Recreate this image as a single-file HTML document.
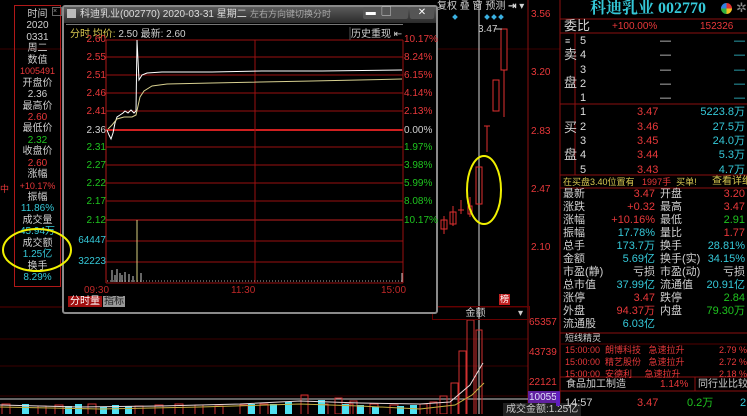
<!DOCTYPE html>
<html><head><meta charset="utf-8"><style>
body{margin:0;width:747px;height:414px;background:#000;overflow:hidden;position:relative;font-family:"Liberation Sans","Noto Sans CJK SC",sans-serif;font-size:11px}
.a{position:absolute;white-space:nowrap;line-height:13px}
.r{color:#e8383a}.g{color:#1fc41f}.c{color:#35c8d8}.w{color:#d0d0d0}.y{color:#d8c850}.dr{color:#c02828}
.lp div{text-align:center;line-height:11.45px;height:11.45px;font-size:10px}
</style></head><body>
<svg class="a" style="left:0;top:0" width="747" height="414">
<line x1="0" y1="49" x2="560" y2="49" stroke="#3a0000"/>
<line x1="0" y1="366" x2="528" y2="366" stroke="#3a0000"/>
<line x1="0" y1="396" x2="528" y2="396" stroke="#3a0000"/>
<line x1="0" y1="339" x2="528" y2="339" stroke="#3a0000"/>
<line x1="0" y1="307" x2="528" y2="307" stroke="#5a0000"/>
<line x1="528" y1="0" x2="528" y2="414" stroke="#8a1010"/>
<line x1="479" y1="0" x2="479" y2="414" stroke="#d8d8d8"/>
<line x1="0" y1="399" x2="528" y2="399" stroke="#c8c8c8"/>
<line x1="560" y1="0" x2="560" y2="414" stroke="#8a1010"/>
<g stroke="#e03030" fill="none">
<line x1="444" y1="216" x2="444" y2="234"/><rect x="441" y="220" width="6" height="9"/>
<line x1="453" y1="206" x2="453" y2="226"/><rect x="450" y="212" width="6" height="12"/>
<line x1="461" y1="200" x2="461" y2="214"/><line x1="458" y1="210" x2="464" y2="210"/>
<line x1="470" y1="197" x2="470" y2="217"/><rect x="468" y="206" width="4" height="8"/>
<rect x="476" y="167" width="6" height="37"/>
<line x1="487" y1="126" x2="487" y2="152"/><line x1="484" y1="126" x2="490" y2="126"/>
<rect x="493" y="80" width="6" height="31"/>
<line x1="504" y1="29" x2="504" y2="117"/><rect x="501" y="29" width="6" height="41" fill="#000"/>
</g>
<text x="478" y="32" fill="#ccc" font-size="10" font-family="Liberation Sans">3.47</text>
<line x1="495" y1="29" x2="502" y2="29" stroke="#ccc"/>
<g fill="#3ab0e0"><rect x="453" y="15" width="4" height="4" transform="rotate(45 455 17)"/><rect x="485" y="15" width="4" height="4" transform="rotate(45 487 17)"/><rect x="492" y="15" width="4" height="4" transform="rotate(45 494 17)"/><rect x="499" y="15" width="4" height="4" transform="rotate(45 501 17)"/></g>
<g stroke="#d03030" fill="none">
<rect x="2" y="404" width="8" height="12"/><rect x="38" y="406" width="8" height="10"/><rect x="55" y="405" width="8" height="10"/><rect x="88" y="404" width="8" height="12"/>
<rect x="135" y="406" width="8" height="10"/><rect x="155" y="405" width="8" height="10"/><rect x="175" y="404" width="8" height="12"/><rect x="195" y="405" width="8" height="10"/><rect x="215" y="406" width="8" height="10"/><rect x="240" y="405" width="8" height="10"/><rect x="260" y="404" width="8" height="12"/>
<rect x="320" y="404" width="8" height="12"/><rect x="345" y="404" width="8" height="12"/><rect x="370" y="404" width="8" height="12"/>
<rect x="301" y="395" width="7" height="20"/><rect x="335" y="398" width="7" height="16"/><rect x="350" y="401" width="7" height="14"/>
<rect x="390" y="405" width="8" height="10"/><rect x="420" y="404" width="7" height="12"/><rect x="430" y="402" width="7" height="14"/>
<rect x="451" y="383" width="7" height="34"/><rect x="440" y="396" width="7" height="18"/>
<rect x="459" y="351" width="7" height="64"/><rect x="467" y="320" width="7" height="95"/><rect x="476" y="330" width="6" height="85"/>
</g>
<g fill="#50e0f0">
<rect x="22" y="404" width="7" height="12"/><rect x="65" y="406" width="7" height="10"/><rect x="75" y="404" width="7" height="12"/><rect x="100" y="407" width="7" height="8"/><rect x="112" y="405" width="7" height="10"/><rect x="125" y="406" width="7" height="10"/><rect x="248" y="404" width="7" height="12"/><rect x="270" y="404" width="7" height="12"/><rect x="285" y="402" width="7" height="14"/><rect x="318" y="400" width="7" height="16"/><rect x="342" y="404" width="7" height="12"/><rect x="357" y="405" width="7" height="10"/><rect x="372" y="407" width="7" height="8"/><rect x="397" y="406" width="7" height="10"/><rect x="410" y="405" width="7" height="10"/>
</g>
<polyline points="0,405 80,407 160,406 240,404 300,401 360,403 420,404 450,402 470,385 483,363" fill="none" stroke="#e8d8d8"/>
<polyline points="0,407 100,409 200,407 300,404 360,406 420,409 455,405 472,395 484,383" fill="none" stroke="#c8b040"/>
<rect x="528" y="391" width="32" height="12" fill="#6020a0"/>
<ellipse cx="484" cy="190" rx="17" ry="34" fill="none" stroke="#f0f000" stroke-width="2"/>
</svg>

<div class="a r" style="left:531px;top:8px;font-size:10px">3.56</div>
<div class="a r" style="left:531px;top:66px;font-size:10px">3.20</div>
<div class="a r" style="left:531px;top:125px;font-size:10px">2.83</div>
<div class="a r" style="left:531px;top:183px;font-size:10px">2.47</div>
<div class="a r" style="left:531px;top:241px;font-size:10px">2.10</div>
<div class="a r" style="left:529px;top:316px;font-size:10px">65357</div>
<div class="a r" style="left:529px;top:346px;font-size:10px">43739</div>
<div class="a r" style="left:529px;top:376px;font-size:10px">22121</div>
<div class="a" style="left:529px;top:391px;font-size:10px;color:#e0e0ff">10055</div>
<div class="a" style="left:503px;top:403px;font-size:10px;color:#ccc;background:#202020;padding:0 3px">成交金额:1.25亿</div>
<div class="a w" style="left:437px;top:0;font-size:10px">复权 叠 窗 预测 <b>⇥</b> ▾</div>
<div class="a" style="left:432px;top:306px;width:96px;height:12px;border:1px solid #600;color:#ccc;font-size:10px;text-align:center">金额 <span style="float:right;margin-right:6px">▾</span></div>
<div class="a" style="left:499px;top:294px;width:11px;height:11px;background:#c02020;color:#fff;font-size:9px;line-height:11px;text-align:center">榜</div>

<div class="a" style="left:14px;top:5px;width:45px;height:280px;border:1px solid #b01818"></div>
<div class="a" style="left:52px;top:7px;width:8px;height:7px;border:1px solid #666;font-size:7px;line-height:7px;color:#999">×</div>
<div class="a lp" style="left:15px;top:9px;width:45px">
<div class="w">时间</div><div class="w">2020</div><div class="w">0331</div><div class="w">周二</div><div class="w">数值</div><div class="r" style="font-size:9px">1005491</div><div class="w">开盘价</div><div class="w">2.36</div><div class="w">最高价</div><div class="r">2.60</div><div class="w">最低价</div><div class="g">2.32</div><div class="w">收盘价</div><div class="r">2.60</div><div class="w">涨幅</div><div class="r" style="font-size:9px">+10.17%</div><div class="w">振幅</div><div class="c">11.86%</div><div class="w">成交量</div><div class="c">45.94万</div><div class="w">成交额</div><div class="c">1.25亿</div><div class="w">换手</div><div class="c">8.29%</div>
</div>
<div class="a r" style="left:0;top:183px;font-size:9px">中</div>

<div class="a" style="left:62px;top:5px;width:372px;height:305px;border:2px solid #8a8a8a;border-radius:3px;background:#000"></div>
<div class="a" style="left:64px;top:7px;width:372px;height:16px;background:linear-gradient(#5a5a5a,#2a2a2a)"></div>
<div class="a" style="left:67px;top:9px;width:9px;height:9px;background:#bbb"></div>
<div class="a" style="left:80px;top:8px;color:#ddd;font-size:10px">科迪乳业(002770) 2020-03-31 星期二</div>
<div class="a" style="left:250px;top:8px;color:#aaa;font-size:9px">左右方向键切换分时</div>
<div class="a" style="left:363px;top:7px;width:45px;height:12px;background:#555;border-radius:2px;color:#fff;font-size:10px;line-height:12px">&nbsp;▬&nbsp;&nbsp;▢</div>
<div class="a" style="left:410px;top:7px;width:24px;height:12px;background:#555;border-radius:2px;color:#fff;font-size:10px;line-height:12px;text-align:center">✕</div>
<div class="a" style="left:66px;top:24px;width:337px;height:1px;background:#777"></div>

<svg class="a" style="left:62px;top:5px" width="374" height="308">
<g stroke="#9a1010">
<line x1="44" y1="35" x2="341" y2="35"/><line x1="44" y1="52" x2="341" y2="52"/><line x1="44" y1="70" x2="341" y2="70"/><line x1="44" y1="88" x2="341" y2="88"/><line x1="44" y1="106" x2="341" y2="106"/><line x1="44" y1="125" x2="341" y2="125" stroke="#d02020" stroke-width="2"/><line x1="44" y1="142" x2="341" y2="142"/><line x1="44" y1="160" x2="341" y2="160"/><line x1="44" y1="178" x2="341" y2="178"/><line x1="44" y1="196" x2="341" y2="196"/><line x1="44" y1="215" x2="341" y2="215" stroke="#c02020"/><line x1="44" y1="236" x2="341" y2="236"/><line x1="44" y1="257" x2="341" y2="257"/>
<line x1="44" y1="35" x2="44" y2="278" stroke="#b01818"/><line x1="341" y1="35" x2="341" y2="278"/><line x1="44" y1="278" x2="341" y2="278"/><line x1="193" y1="35" x2="193" y2="278"/>
</g>
<line x1="288" y1="22" x2="288" y2="35" stroke="#555"/>
<polyline points="45,125 47,130 49,134 51,128 53,118 55,112 58,110 61,108 63,106 66,108 69,105 72,108 74,106 75,35 77,75 80,70 85,68 100,67 150,67 200,66 260,66 340,65" fill="none" stroke="#ffffff"/>
<polyline points="46,124 50,120 55,114 62,112 70,112 74,110 78,92 82,86 90,81 105,79 150,78 250,76 340,74" fill="none" stroke="#d8d090"/>
<g stroke="#ccc"><line x1="75" y1="215" x2="75" y2="277" stroke="#d8d080"/><line x1="50" y1="265" x2="50" y2="277"/><line x1="53" y1="270" x2="53" y2="277"/><line x1="55" y1="264" x2="55" y2="277"/><line x1="58" y1="268" x2="58" y2="277"/><line x1="60" y1="270" x2="60" y2="277"/><line x1="63" y1="267" x2="63" y2="277"/><line x1="67" y1="269" x2="67" y2="277"/><line x1="71" y1="271" x2="71" y2="277"/><line x1="79" y1="268" x2="79" y2="277"/><line x1="340" y1="268" x2="340" y2="277"/></g>
<line x1="45" y1="276" x2="340" y2="276" stroke="#aaa" stroke-dasharray="1 2"/>
</svg>
<div class="a" style="left:70px;top:28px;font-size:10px" ><span class="y">分时 均价:</span> <span class="w">2.50 最新: 2.60</span></div>
<div class="a w" style="left:351px;top:28px;font-size:10px">历史重现 ⇤</div>
<div class="a" style="left:78px;top:34px;width:28px;text-align:right;font-size:10px;line-height:11px">
<div class="r" style="height:18px">2.60</div><div class="r" style="height:18px">2.55</div><div class="r" style="height:18px">2.51</div><div class="r" style="height:18px">2.46</div><div class="r" style="height:19px">2.41</div><div class="w" style="height:17px">2.36</div><div class="g" style="height:18px">2.31</div><div class="g" style="height:18px">2.27</div><div class="g" style="height:18px">2.22</div><div class="g" style="height:19px">2.17</div><div class="g" style="height:20px">2.12</div><div class="c" style="height:21px">64447</div><div class="c">32223</div>
</div>
<div class="a" style="left:404px;top:34px;font-size:10px;line-height:11px">
<div class="r" style="height:18px">10.17%</div><div class="r" style="height:18px">8.24%</div><div class="r" style="height:18px">6.15%</div><div class="r" style="height:18px">4.14%</div><div class="r" style="height:19px">2.13%</div><div class="w" style="height:17px">0.00%</div><div class="g" style="height:18px">1.97%</div><div class="g" style="height:18px">3.98%</div><div class="g" style="height:18px">5.99%</div><div class="g" style="height:19px">8.08%</div><div class="g">10.17%</div>
</div>
<div class="a dr" style="left:84px;top:284px;font-size:10px">09:30</div>
<div class="a dr" style="left:231px;top:284px;font-size:10px">11:30</div>
<div class="a dr" style="left:381px;top:284px;font-size:10px">15:00</div>
<div class="a" style="left:68px;top:296px;width:34px;height:11px;background:#a01010;color:#fff;font-size:10px;line-height:11px;text-align:center">分时量</div>
<div class="a" style="left:103px;top:296px;width:22px;height:11px;background:#999;color:#222;font-size:10px;line-height:11px;text-align:center">指标</div>

<svg class="a" style="left:0;top:225px" width="80" height="60"><ellipse cx="37" cy="25" rx="34" ry="21" fill="none" stroke="#f0f000" stroke-width="2"/></svg>

<div class="a" style="left:590px;top:0;font-size:16px;line-height:18px;font-weight:bold;color:#35c8d8;font-family:'Liberation Serif','Noto Serif CJK SC',serif">科迪乳业 002770</div>
<div class="a" style="left:721px;top:3px;width:11px;height:11px;border-radius:50%;background:conic-gradient(#e03030 0 25%,#f0c020 0 50%,#30b040 0 75%,#3080e0 0)"></div>
<div class="a" style="left:736px;top:1px;color:#888;font-size:13px">✲</div>
<svg class="a" style="left:560px;top:0" width="187" height="414"><g stroke="#8a1010">
<line x1="0" y1="19" x2="187" y2="19"/><line x1="0" y1="33" x2="187" y2="33"/><line x1="0" y1="104" x2="187" y2="104"/><line x1="0" y1="175" x2="187" y2="175"/><line x1="0" y1="188" x2="187" y2="188"/><line x1="0" y1="333" x2="187" y2="333"/><line x1="0" y1="344" x2="187" y2="344" stroke="#500"/><line x1="0" y1="377" x2="187" y2="377"/><line x1="0" y1="391" x2="187" y2="391"/><line x1="15" y1="33" x2="15" y2="175"/><line x1="135" y1="377" x2="135" y2="391"/></g></svg>
<div class="a w" style="left:564px;top:19px;font-size:13px;line-height:14px">委比</div>
<div class="a r" style="left:612px;top:20px;font-size:10px">+100.00%</div>
<div class="a r" style="left:700px;top:20px;font-size:10px">152326</div>
<div class="a w" style="left:565px;top:35px;font-size:9px">≡</div>
<div class="a w" style="left:564px;top:48px;font-size:13px">卖</div>
<div class="a w" style="left:564px;top:76px;font-size:13px">盘</div>
<div class="a w" style="left:564px;top:121px;font-size:13px">买</div>
<div class="a w" style="left:564px;top:148px;font-size:13px">盘</div>
<div class="a" style="left:580px;top:34px;font-size:11px;line-height:14.3px;color:#ddd;width:167px">
<div style="position:relative">5<span style="position:absolute;left:80px">—</span><span style="position:absolute;right:2px;color:#35c8d8">—</span></div>
<div style="position:relative">4<span style="position:absolute;left:80px">—</span><span style="position:absolute;right:2px;color:#35c8d8">—</span></div>
<div style="position:relative">3<span style="position:absolute;left:80px">—</span><span style="position:absolute;right:2px;color:#35c8d8">—</span></div>
<div style="position:relative">2<span style="position:absolute;left:80px">—</span><span style="position:absolute;right:2px;color:#35c8d8">—</span></div>
<div style="position:relative">1<span style="position:absolute;left:80px">—</span><span style="position:absolute;right:2px;color:#35c8d8">—</span></div>
<div style="position:relative">1<span class="r" style="position:absolute;left:57px">3.47</span><span class="c" style="position:absolute;right:2px">5223.8万</span></div>
<div style="position:relative">2<span class="r" style="position:absolute;left:57px">3.46</span><span class="c" style="position:absolute;right:2px">27.5万</span></div>
<div style="position:relative">3<span class="r" style="position:absolute;left:57px">3.45</span><span class="c" style="position:absolute;right:2px">24.0万</span></div>
<div style="position:relative">4<span class="r" style="position:absolute;left:57px">3.44</span><span class="c" style="position:absolute;right:2px">5.3万</span></div>
<div style="position:relative">5<span class="r" style="position:absolute;left:57px">3.43</span><span class="c" style="position:absolute;right:2px">4.7万</span></div>
</div>
<div class="a" style="left:563px;top:176px;font-size:9px;line-height:12px"><span class="y">在买盘3.40位置有</span> <span class="r">&nbsp;&nbsp;1997手</span> <span class="y">&nbsp;买单!</span></div>
<div class="a y" style="left:712px;top:176px;font-size:10px;line-height:12px">查看详细</div>
<div class="a" style="left:563px;top:188px;width:184px;font-size:11px;line-height:13px">
<div style="position:relative;height:13px"><span class="w">最新</span><span class="r" style="position:absolute;right:92px">3.47</span><span class="w" style="position:absolute;left:97px">开盘</span><span class="r" style="position:absolute;right:2px">3.20</span></div>
<div style="position:relative;height:13px"><span class="w">涨跌</span><span class="r" style="position:absolute;right:92px">+0.32</span><span class="w" style="position:absolute;left:97px">最高</span><span class="r" style="position:absolute;right:2px">3.47</span></div>
<div style="position:relative;height:13px"><span class="w">涨幅</span><span class="r" style="position:absolute;right:92px">+10.16%</span><span class="w" style="position:absolute;left:97px">最低</span><span class="g" style="position:absolute;right:2px">2.91</span></div>
<div style="position:relative;height:13px"><span class="w">振幅</span><span class="c" style="position:absolute;right:92px">17.78%</span><span class="w" style="position:absolute;left:97px">量比</span><span class="r" style="position:absolute;right:2px">1.77</span></div>
<div style="position:relative;height:13px"><span class="w">总手</span><span class="c" style="position:absolute;right:92px">173.7万</span><span class="w" style="position:absolute;left:97px">换手</span><span class="c" style="position:absolute;right:2px">28.81%</span></div>
<div style="position:relative;height:13px"><span class="w">金额</span><span class="c" style="position:absolute;right:92px">5.69亿</span><span class="w" style="position:absolute;left:97px">换手(实)</span><span class="c" style="position:absolute;right:2px">34.15%</span></div>
<div style="position:relative;height:13px"><span class="w">市盈(静)</span><span class="w" style="position:absolute;right:92px">亏损</span><span class="w" style="position:absolute;left:97px">市盈(动)</span><span class="w" style="position:absolute;right:2px">亏损</span></div>
<div style="position:relative;height:13px"><span class="w">总市值</span><span class="c" style="position:absolute;right:92px">37.99亿</span><span class="w" style="position:absolute;left:97px">流通值</span><span class="c" style="position:absolute;right:2px">20.91亿</span></div>
<div style="position:relative;height:13px"><span class="w">涨停</span><span class="r" style="position:absolute;right:92px">3.47</span><span class="w" style="position:absolute;left:97px">跌停</span><span class="g" style="position:absolute;right:2px">2.84</span></div>
<div style="position:relative;height:13px"><span class="w">外盘</span><span class="r" style="position:absolute;right:92px">94.37万</span><span class="w" style="position:absolute;left:97px">内盘</span><span class="g" style="position:absolute;right:2px">79.30万</span></div>
<div style="position:relative;height:13px"><span class="w">流通股</span><span class="c" style="position:absolute;right:92px">6.03亿</span></div>
</div>
<div class="a w" style="left:565px;top:333px;font-size:9px;line-height:11px">短线精灵</div>
<div class="a r" style="left:565px;top:344px;font-size:9px;line-height:12px;width:182px">
<div style="position:relative">15:00:00 &nbsp;朗博科技 &nbsp;&nbsp;急速拉升<span style="position:absolute;right:0">2.79 %</span></div>
<div style="position:relative">15:00:00 &nbsp;精艺股份 &nbsp;&nbsp;急速拉升<span style="position:absolute;right:0">2.72 %</span></div>
<div style="position:relative">15:00:00 &nbsp;安德利 &nbsp;&nbsp;&nbsp;&nbsp;急速拉升<span style="position:absolute;right:0">2.18 %</span></div>
</div>
<div class="a w" style="left:566px;top:378px;font-size:10px">食品加工制造</div>
<div class="a r" style="left:660px;top:378px;font-size:10px">1.14%</div>
<div class="a w" style="left:698px;top:378px;font-size:10px">同行业比较</div>
<div class="a w" style="left:565px;top:397px;font-size:11px">14:57</div>
<div class="a r" style="left:637px;top:397px;font-size:11px">3.47</div>
<div class="a g" style="left:687px;top:397px;font-size:11px">0.2万</div>
<div class="a c" style="left:740px;top:397px;font-size:11px">2</div>
<div class="a" style="left:556px;top:392px;width:4px;height:14px;background:#6020c0"></div>
</body></html>
